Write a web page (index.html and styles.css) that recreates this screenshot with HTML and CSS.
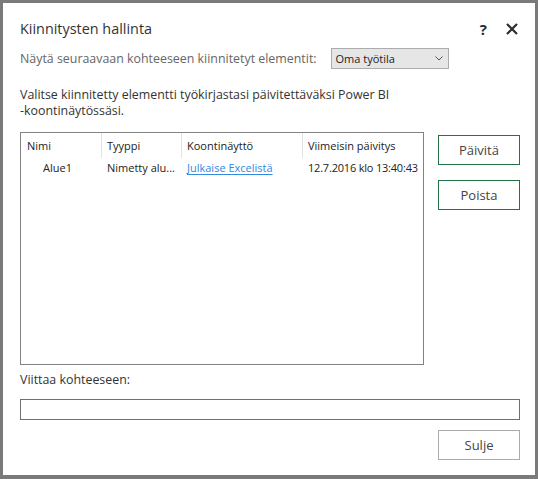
FILE: index.html
```html
<!DOCTYPE html>
<html lang="fi">
<head>
<meta charset="utf-8">
<title>Kiinnitysten hallinta</title>
<link rel="stylesheet" href="styles.css">
</head>
<body>
<div class="dialog">
  <div class="titlebar">
    <h1 class="title">Kiinnitysten hallinta</h1>
    <div class="title-actions">
      <span class="help">?</span>
      <svg class="close" width="12" height="12" viewBox="0 0 12 12" aria-label="Sulje">
        <path d="M1 1 L11 11 M11 1 L1 11" stroke="#2b2b2b" stroke-width="2.2" fill="none"/>
      </svg>
    </div>
  </div>

  <div class="target-row">
    <span class="target-label">Näytä seuraavaan kohteeseen kiinnitetyt elementit:</span>
    <div class="select">
      <span class="select-text">Oma työtila</span>
      <svg class="chevron" width="8" height="5" viewBox="0 0 8 5">
        <path d="M0.5 0.5 L4 4 L7.5 0.5" stroke="#555" stroke-width="1" fill="none"/>
      </svg>
    </div>
  </div>

  <p class="intro">Valitse kiinnitetty elementti työkirjastasi päivitettäväksi Power BI<br>-koontinäytössäsi.</p>

  <div class="main">
    <div class="list">
      <div class="list-head">
        <div class="cell first">Nimi</div>
        <div class="cell">Tyyppi</div>
        <div class="cell">Koontinäyttö</div>
        <div class="cell last">Viimeisin päivitys</div>
      </div>
      <div class="list-row">
        <div class="cell first indent">Alue1</div>
        <div class="cell">Nimetty alu...</div>
        <div class="cell"><a class="link" href="#">Julkaise Excelistä</a></div>
        <div class="cell last date">12.7.2016 klo 13:40:43</div>
      </div>
    </div>
    <div class="side-buttons">
      <button class="btn btn-primary">Päivitä</button>
      <button class="btn btn-primary">Poista</button>
    </div>
  </div>

  <div class="ref-label">Viittaa kohteeseen:</div>
  <div class="ref-input"></div>

  <div class="footer">
    <button class="btn btn-plain">Sulje</button>
  </div>
</div>
</body>
</html>
```
FILE: styles.css
```css
html, body {
  margin: 0;
  padding: 0;
  background: #ffffff;
}

.dialog {
  box-sizing: border-box;
  width: 538px;
  height: 479px;
  border: 3px solid #7a7a7a;
  border-bottom-width: 4px;
  padding: 16px 15px 15px 17px;
  display: flex;
  flex-direction: column;
  font-family: "Open Sans", "Noto Sans", sans-serif;
  font-size: 12.4px;
  color: #333333;
  background: #ffffff;
}

.titlebar {
  display: flex;
  justify-content: space-between;
  align-items: center;
  height: 20px;
}

.title {
  margin: 0;
  font-size: 14.4px;
  font-weight: 400;
  line-height: 20px;
  color: #333333;
}

.title-actions {
  display: flex;
  align-items: center;
  gap: 19px;
  margin-right: 2px;
}

.help {
  font-size: 15px;
  font-weight: 700;
  line-height: 20px;
  color: #2b2b2b;
}

.close {
  display: block;
}

.target-row {
  display: flex;
  align-items: center;
  height: 21px;
  margin-top: 9px;
  gap: 14px;
}

.target-label {
  color: #666666;
  line-height: 16px;
}

.select {
  box-sizing: border-box;
  width: 118px;
  height: 21px;
  border: 1px solid #acacac;
  background: #e6e6e6;
  display: flex;
  align-items: center;
  justify-content: space-between;
  padding: 0 5px 0 4px;
}

.select-text {
  font-size: 11px;
  color: #222222;
  line-height: 16px;
}

.chevron {
  display: block;
}

.intro {
  margin: 18px 0 0 0;
  line-height: 16px;
  color: #333333;
}

.main {
  display: flex;
  margin-top: 13px;
  gap: 14px;
}

.list {
  box-sizing: border-box;
  width: 404px;
  height: 233px;
  border: 1px solid #828282;
  font-size: 11px;
  color: #222222;
}

.list-head,
.list-row {
  display: grid;
  grid-template-columns: 81px 80px 121px 1fr;
}

.list-head .cell {
  line-height: 25px;
  height: 25px;
  border-right: 1px solid #e3e3e3;
}

.list-head .cell.last {
  border-right: none;
}

.list-row .cell {
  line-height: 20px;
  height: 20px;
}

.cell {
  box-sizing: border-box;
  padding-left: 5px;
  white-space: nowrap;
  overflow: hidden;
}

.cell.first {
  padding-left: 6px;
}

.cell.indent {
  padding-left: 22px;
}

.cell.date {
  letter-spacing: -0.2px;
}

.link {
  color: #3189e0;
  text-decoration: underline;
  text-underline-offset: 2px;
}

.side-buttons {
  display: flex;
  flex-direction: column;
  gap: 15px;
  padding-top: 3px;
}

.btn {
  box-sizing: border-box;
  width: 82px;
  height: 30px;
  background: #ffffff;
  font-family: "Open Sans", "Noto Sans", sans-serif;
  font-size: 13px;
  color: #444444;
  padding: 0;
  margin: 0;
}

.btn-primary {
  border: 1px solid #217346;
}

.btn-plain {
  border: 1px solid #ababab;
}

.ref-label {
  margin-top: 7px;
  line-height: 16px;
  color: #333333;
}

.ref-input {
  box-sizing: border-box;
  margin-top: 11px;
  width: 500px;
  height: 21px;
  border: 1px solid #6f6f6f;
}

.footer {
  display: flex;
  justify-content: flex-end;
  margin-top: 10px;
}
```
